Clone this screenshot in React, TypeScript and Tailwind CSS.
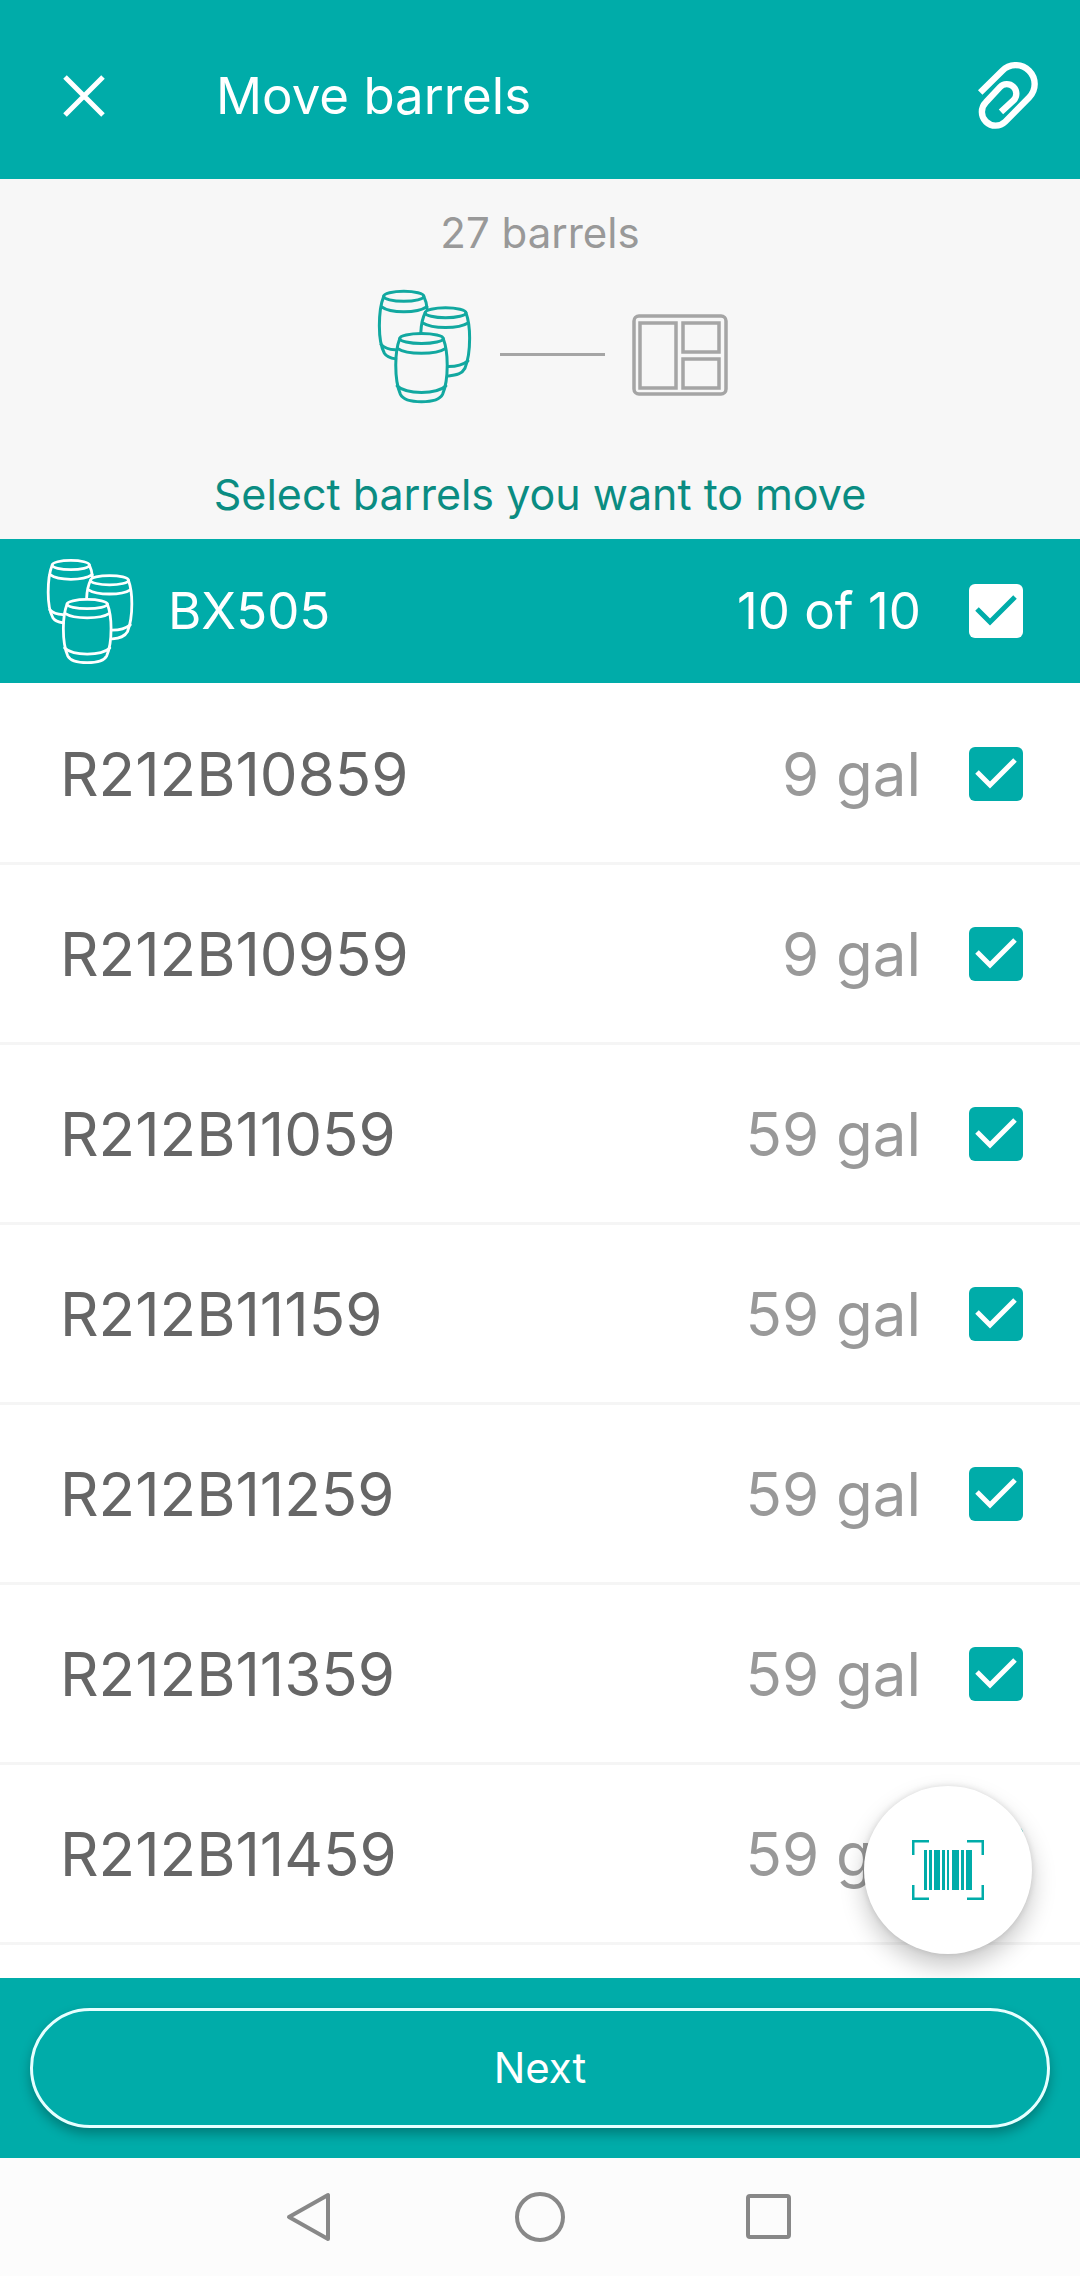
import { useState } from "react";

type Barrel = { id: string; volume: string };

const barrels: Barrel[] = [
  { id: "R212B10859", volume: "9 gal" },
  { id: "R212B10959", volume: "9 gal" },
  { id: "R212B11059", volume: "59 gal" },
  { id: "R212B11159", volume: "59 gal" },
  { id: "R212B11259", volume: "59 gal" },
  { id: "R212B11359", volume: "59 gal" },
  { id: "R212B11459", volume: "59 gal" },
];

function BarrelsIcon({ className }: { className: string }) {
  return (
    <svg viewBox="80 268 284 344" fill="none" stroke="currentColor" strokeWidth="9" strokeLinecap="round" className={className}>
      {/* back left */}
      <ellipse cx="160" cy="290" rx="60" ry="15" />
      <path d="M100 290C90 315 87 345 87 378C87 410 91 440 102 460C108 470 118 474 136 477" />
      <path d="M220 290C226 302 229 315 230 329" />
      <path d="M93 321C120 341 200 341 229 321M92 434C102 444 116 449 134 450" />
      {/* back right */}
      <ellipse cx="285" cy="339" rx="61" ry="15" />
      <path d="M224 339C216 355 212 375 211 398" />
      <path d="M346 339C353 358 357 385 357 415C357 450 353 480 343 505C334 522 318 526 294 528" />
      <path d="M217 370C245 388 325 388 352 370M294 500C318 500 338 494 352 483" />
      {/* front */}
      <ellipse cx="213" cy="416" rx="65" ry="15" />
      <path d="M148 416C139 440 136 465 136 495C136 530 140 560 150 583C158 599 178 605 213 605C248 605 268 599 276 583C286 560 290 530 290 495C290 465 287 440 278 416" />
      <path d="M141 446C170 465 256 465 285 446M140 558C168 584 258 584 286 558" />
    </svg>
  );
}

function ClipIcon() {
  return (
    <svg viewBox="234 182 178 200" fill="none" stroke="currentColor" strokeWidth="19" className="h-[67px] w-[60px]">
      <path d="M240 273L306 208A56 56 0 0 1 386 288L315 360A41 41 0 0 1 257 302L299 257A28 28 0 0 1 340 296L302 331" />
    </svg>
  );
}

function LayoutIcon() {
  return (
    <svg viewBox="0 0 96 82" fill="none" stroke="currentColor" strokeWidth="3.5" className="h-[82px] w-24">
      <rect x="2" y="2" width="92" height="78" rx="5" />
      <path d="M8 9h36v65H8zM51 9h36v29H51zM51 45h36v29H51z" />
    </svg>
  );
}

function ScanIcon() {
  return (
    <svg viewBox="0 0 72 60" fill="currentColor" className="h-[60px] w-[72px]">
      <path d="M1 15V1H17M55 1H71V15M1 45V59H17M55 59H71V45" fill="none" stroke="currentColor" strokeWidth="3" />
      <path d="M12 10h3v40h-3zM17 10h3v40h-3zM22 10h6v40h-6zM30 10h3v40h-3zM35 10h2v40h-2zM40 10h7v40h-7zM49 10h3v40h-3zM54 10h6v40h-6z" />
    </svg>
  );
}

type CheckProps = { id: string; checked: boolean; onChange: () => void; inverted?: boolean };

function Check({ id, checked, onChange, inverted }: CheckProps) {
  return (
    <span className="relative ml-12 size-[54px] shrink-0">
      <input
        id={id}
        type="checkbox"
        checked={checked}
        onChange={onChange}
        className={`block size-full appearance-none rounded-md ${inverted ? "bg-white" : "bg-[#00aca9]"}`}
      />
      {checked && (
        <svg
          viewBox="0 0 54 54"
          fill="none"
          stroke="currentColor"
          strokeWidth="5"
          className={`pointer-events-none absolute inset-0 ${inverted ? "text-[#00aca9]" : "text-white"}`}
        >
          <path d="M8 25L21 38L46 13" />
        </svg>
      )}
    </span>
  );
}

export default function App() {
  const [unchecked, setUnchecked] = useState<string[]>([]);

  const toggle = (id: string) => {
    setUnchecked(unchecked.includes(id) ? unchecked.filter((u) => u !== id) : [...unchecked, id]);
  };

  const toggleAll = () => {
    setUnchecked(unchecked.length ? [] : barrels.map((b) => b.id));
  };

  return (
    <div className="flex min-h-screen flex-col bg-white font-['Inter',sans-serif]">
      <header className="flex h-[179px] items-center bg-[#00aca9] px-[42px] pt-3 text-white">
        <button aria-label="Close" className="flex size-[84px] items-center justify-center">
          <svg viewBox="0 0 42 42" stroke="currentColor" strokeWidth="5" className="size-[42px]">
            <path d="M2 2L40 40M40 2L2 40" />
          </svg>
        </button>
        <h1 className="ml-[90px] flex-1 text-[51px] leading-[60px]">Move barrels</h1>
        <button aria-label="Attachments">
          <ClipIcon />
        </button>
      </header>

      <section className="flex h-[360px] flex-col items-center bg-[#f7f7f7] pt-7">
        <p className="text-[42px] leading-[52px] text-[#999999]">27 barrels</p>
        <div className="mt-[30px] flex items-center gap-7 pl-6 text-[#a5a5a5]">
          <BarrelsIcon className="h-[115px] w-[95px] text-[#12a8a0]" />
          <div className="flex items-center gap-[27px] pt-4">
            <span className="h-[3px] w-[105px] bg-[#a5a5a5]" />
            <LayoutIcon />
          </div>
        </div>
        <p className="mt-16 text-[43px] leading-[52px] text-[#0a8c82]">Select barrels you want to move</p>
      </section>

      <label htmlFor="group" className="flex h-36 items-center bg-[#00aca9] pr-[57px] pl-[46px] text-[51px] leading-[60px] text-white">
        <BarrelsIcon className="h-[107px] w-[88px]" />
        <span className="ml-[34px] flex-1">BX505</span>
        <span>10 of 10</span>
        <Check id="group" checked={unchecked.length === 0} onChange={toggleAll} inverted />
      </label>

      <main className="relative flex-1 pt-0.5">
        <ul>
          {barrels.map((b) => (
            <li key={b.id} className="border-b-3 border-[#f5f5f5]">
              <label htmlFor={b.id} className="flex h-[177px] items-center pr-[57px] pl-[60px] text-[60px] leading-[72px]">
                <span className="flex-1 text-[#666666]">{b.id}</span>
                <span className="text-[#999999]">{b.volume}</span>
                <Check id={b.id} checked={!unchecked.includes(b.id)} onChange={() => toggle(b.id)} />
              </label>
            </li>
          ))}
        </ul>
        <button
          aria-label="Scan barcode"
          className="absolute right-12 bottom-6 flex size-[168px] items-center justify-center rounded-full bg-white text-[#00aca9] shadow-[0_12px_24px_rgba(0,0,0,0.22),0_0_6px_rgba(0,0,0,0.12)]"
        >
          <ScanIcon />
        </button>
      </main>

      <footer className="relative bg-[#00aca9] p-[30px]">
        <button className="h-[120px] w-full rounded-full border-3 border-[#e6ffff] bg-[#00aca9] text-[42px] leading-[52px] text-white shadow-[0_6px_12px_rgba(0,0,0,0.28)]">
          Next
        </button>
      </footer>

      <nav className="flex h-[118px] items-center justify-center bg-[#fcfcfc] text-[#888888]">
        <button aria-label="Back" className="flex w-[229px] justify-center">
          <svg viewBox="0 0 50 50" fill="none" stroke="currentColor" strokeWidth="4" strokeLinejoin="round" className="size-[50px]">
            <path d="M42 3V47L3 25Z" />
          </svg>
        </button>
        <button aria-label="Home" className="flex w-[229px] justify-center">
          <svg viewBox="0 0 50 50" fill="none" stroke="currentColor" strokeWidth="4" className="size-[50px]">
            <circle cx="25" cy="25" r="23" />
          </svg>
        </button>
        <button aria-label="Recent apps" className="flex w-[229px] justify-center">
          <svg viewBox="0 0 50 50" fill="none" stroke="currentColor" strokeWidth="4" className="size-[50px]">
            <rect x="4" y="4" width="41" height="41" rx="2" />
          </svg>
        </button>
      </nav>
    </div>
  );
}
